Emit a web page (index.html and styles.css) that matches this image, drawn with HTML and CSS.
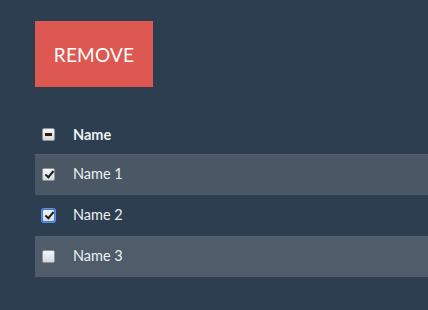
FILE: index.html
```html
<!DOCTYPE html>
<html lang="en">
<head>
  <meta charset="UTF-8">
  <title>Remove list</title>
  <link rel="stylesheet" href="styles.css">
</head>
<body>
  <button class="remove-btn">Remove</button>

  <table class="name-table">
    <thead>
      <tr>
        <th class="check-cell"><span class="box mixed"></span></th>
        <th>Name</th>
      </tr>
    </thead>
    <tbody>
      <tr class="odd">
        <td class="check-cell"><span class="box checked"></span></td>
        <td>Name 1</td>
      </tr>
      <tr>
        <td class="check-cell"><span class="box checked focused"></span></td>
        <td>Name 2</td>
      </tr>
      <tr class="odd alt">
        <td class="check-cell"><span class="box"></span></td>
        <td>Name 3</td>
      </tr>
    </tbody>
  </table>
</body>
</html>
```

FILE: styles.css
```css
html {
  overflow: hidden;
}

body {
  font-family: Lato, "Open Sans", sans-serif;
  background-color: #2c3e50;
  color: #ecf0f1;
  margin: 0;
  padding: 21px 0 0 35px;
}

.remove-btn {
  display: block;
  width: 118px;
  height: 66px;
  background-color: #dd5850;
  color: #fff;
  border: none;
  font-family: Lato, sans-serif;
  font-size: 19px;
  text-transform: uppercase;
  letter-spacing: 0.2px;
  padding: 0;
  cursor: pointer;
}

.name-table {
  margin-top: 27px;
  width: calc(100vw - 35px);
  border-collapse: collapse;
  font-size: 14.5px;
}

.name-table th {
  height: 40px;
  text-align: left;
  font-weight: bold;
  padding: 1px 0 0;
  box-sizing: border-box;
}

.name-table td {
  height: 41px;
  padding: 0 0 2px;
  box-sizing: border-box;
}

.name-table tr.odd {
  background-color: #4a5764;
  box-shadow: inset 0 1px 0 #536070;
}

.name-table tr.alt {
  background-color: #4f5d6b;
}

.name-table .check-cell {
  width: 38px;
  padding: 0 0 0 7px;
  line-height: 0;
}

.box {
  display: inline-block;
  position: relative;
  width: 11px;
  height: 11px;
  border: 1px solid #8e949a;
  border-radius: 2px;
  background: linear-gradient(#f6f6f6, #d9d9d9);
}

.box.checked::after {
  content: "";
  position: absolute;
  left: 4px;
  top: 0px;
  width: 3px;
  height: 7px;
  border: solid #1e1e1e;
  border-width: 0 2px 2px 0;
  transform: rotate(40deg);
}

.box.mixed::after {
  content: "";
  position: absolute;
  left: 2px;
  top: 4px;
  width: 7px;
  height: 3px;
  background-color: #222;
}

.box.focused {
  border-color: #3f7ee0;
  box-shadow: 0 0 0 1px #5a8fe6;
}
```
